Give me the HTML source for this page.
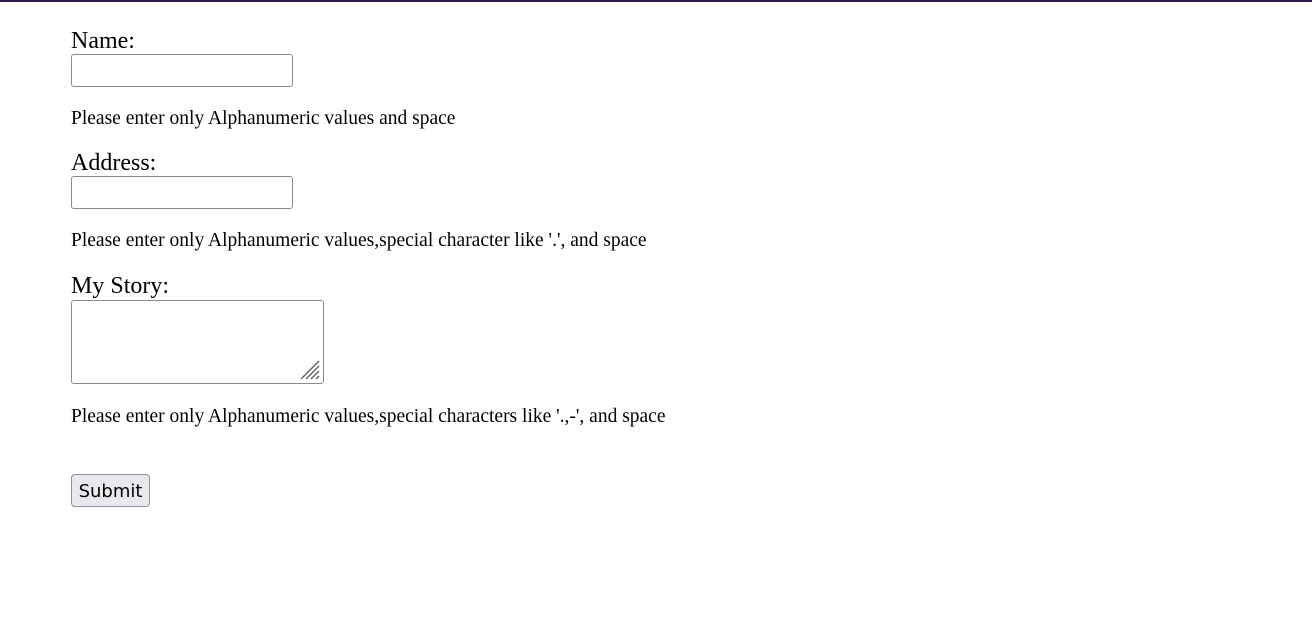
<!DOCTYPE html>
<html><head><meta charset="utf-8"><style>
body{margin:0;background:#fff;width:1312px;height:639px;position:relative;overflow:hidden;font-family:"Liberation Serif",serif;color:#000}
.top{position:absolute;left:0;top:0;width:1312px;height:2px;background:#2e1a4f}
.l{position:absolute;left:71px;font-size:24px;line-height:24px;white-space:nowrap}
.h{position:absolute;left:71px;font-size:19.5px;line-height:20px;white-space:nowrap}
.in{position:absolute;left:71px;width:220px;height:31px;border:1px solid #8a8a96;border-radius:3px;background:#fff}
.ta{position:absolute;left:71px;top:300px;width:251px;height:82px;border:1px solid #8a8a96;border-radius:3px;background:#fff}
.btn{position:absolute;left:71px;top:474px;width:77px;height:31px;border:1px solid #8f8f9d;border-radius:4px;background:#e9e9ed;font-family:"DejaVu Sans",sans-serif;font-size:18px;line-height:33px;text-align:center}
</style></head><body>
<div class="top"></div>
<div class="l" style="top:29px">Name:</div>
<div class="in" style="top:54px"></div>
<div class="h" style="top:109px">Please enter only Alphanumeric values and space</div>
<div class="l" style="top:151px">Address:</div>
<div class="in" style="top:176px"></div>
<div class="h" style="top:231px">Please enter only Alphanumeric values,special character like '.', and space</div>
<div class="l" style="top:274px">My Story:</div>
<div class="ta"><svg width="24" height="24" style="position:absolute;right:2px;bottom:2px"><path d="M4 22L22 4M9 22L22 9M14 22L22 14M19 22L22 19" stroke="#666" stroke-width="1.5"/></svg></div>
<div class="h" style="top:407px">Please enter only Alphanumeric values,special characters like '.,-', and space</div>
<div class="btn">Submit</div>
</body></html>
